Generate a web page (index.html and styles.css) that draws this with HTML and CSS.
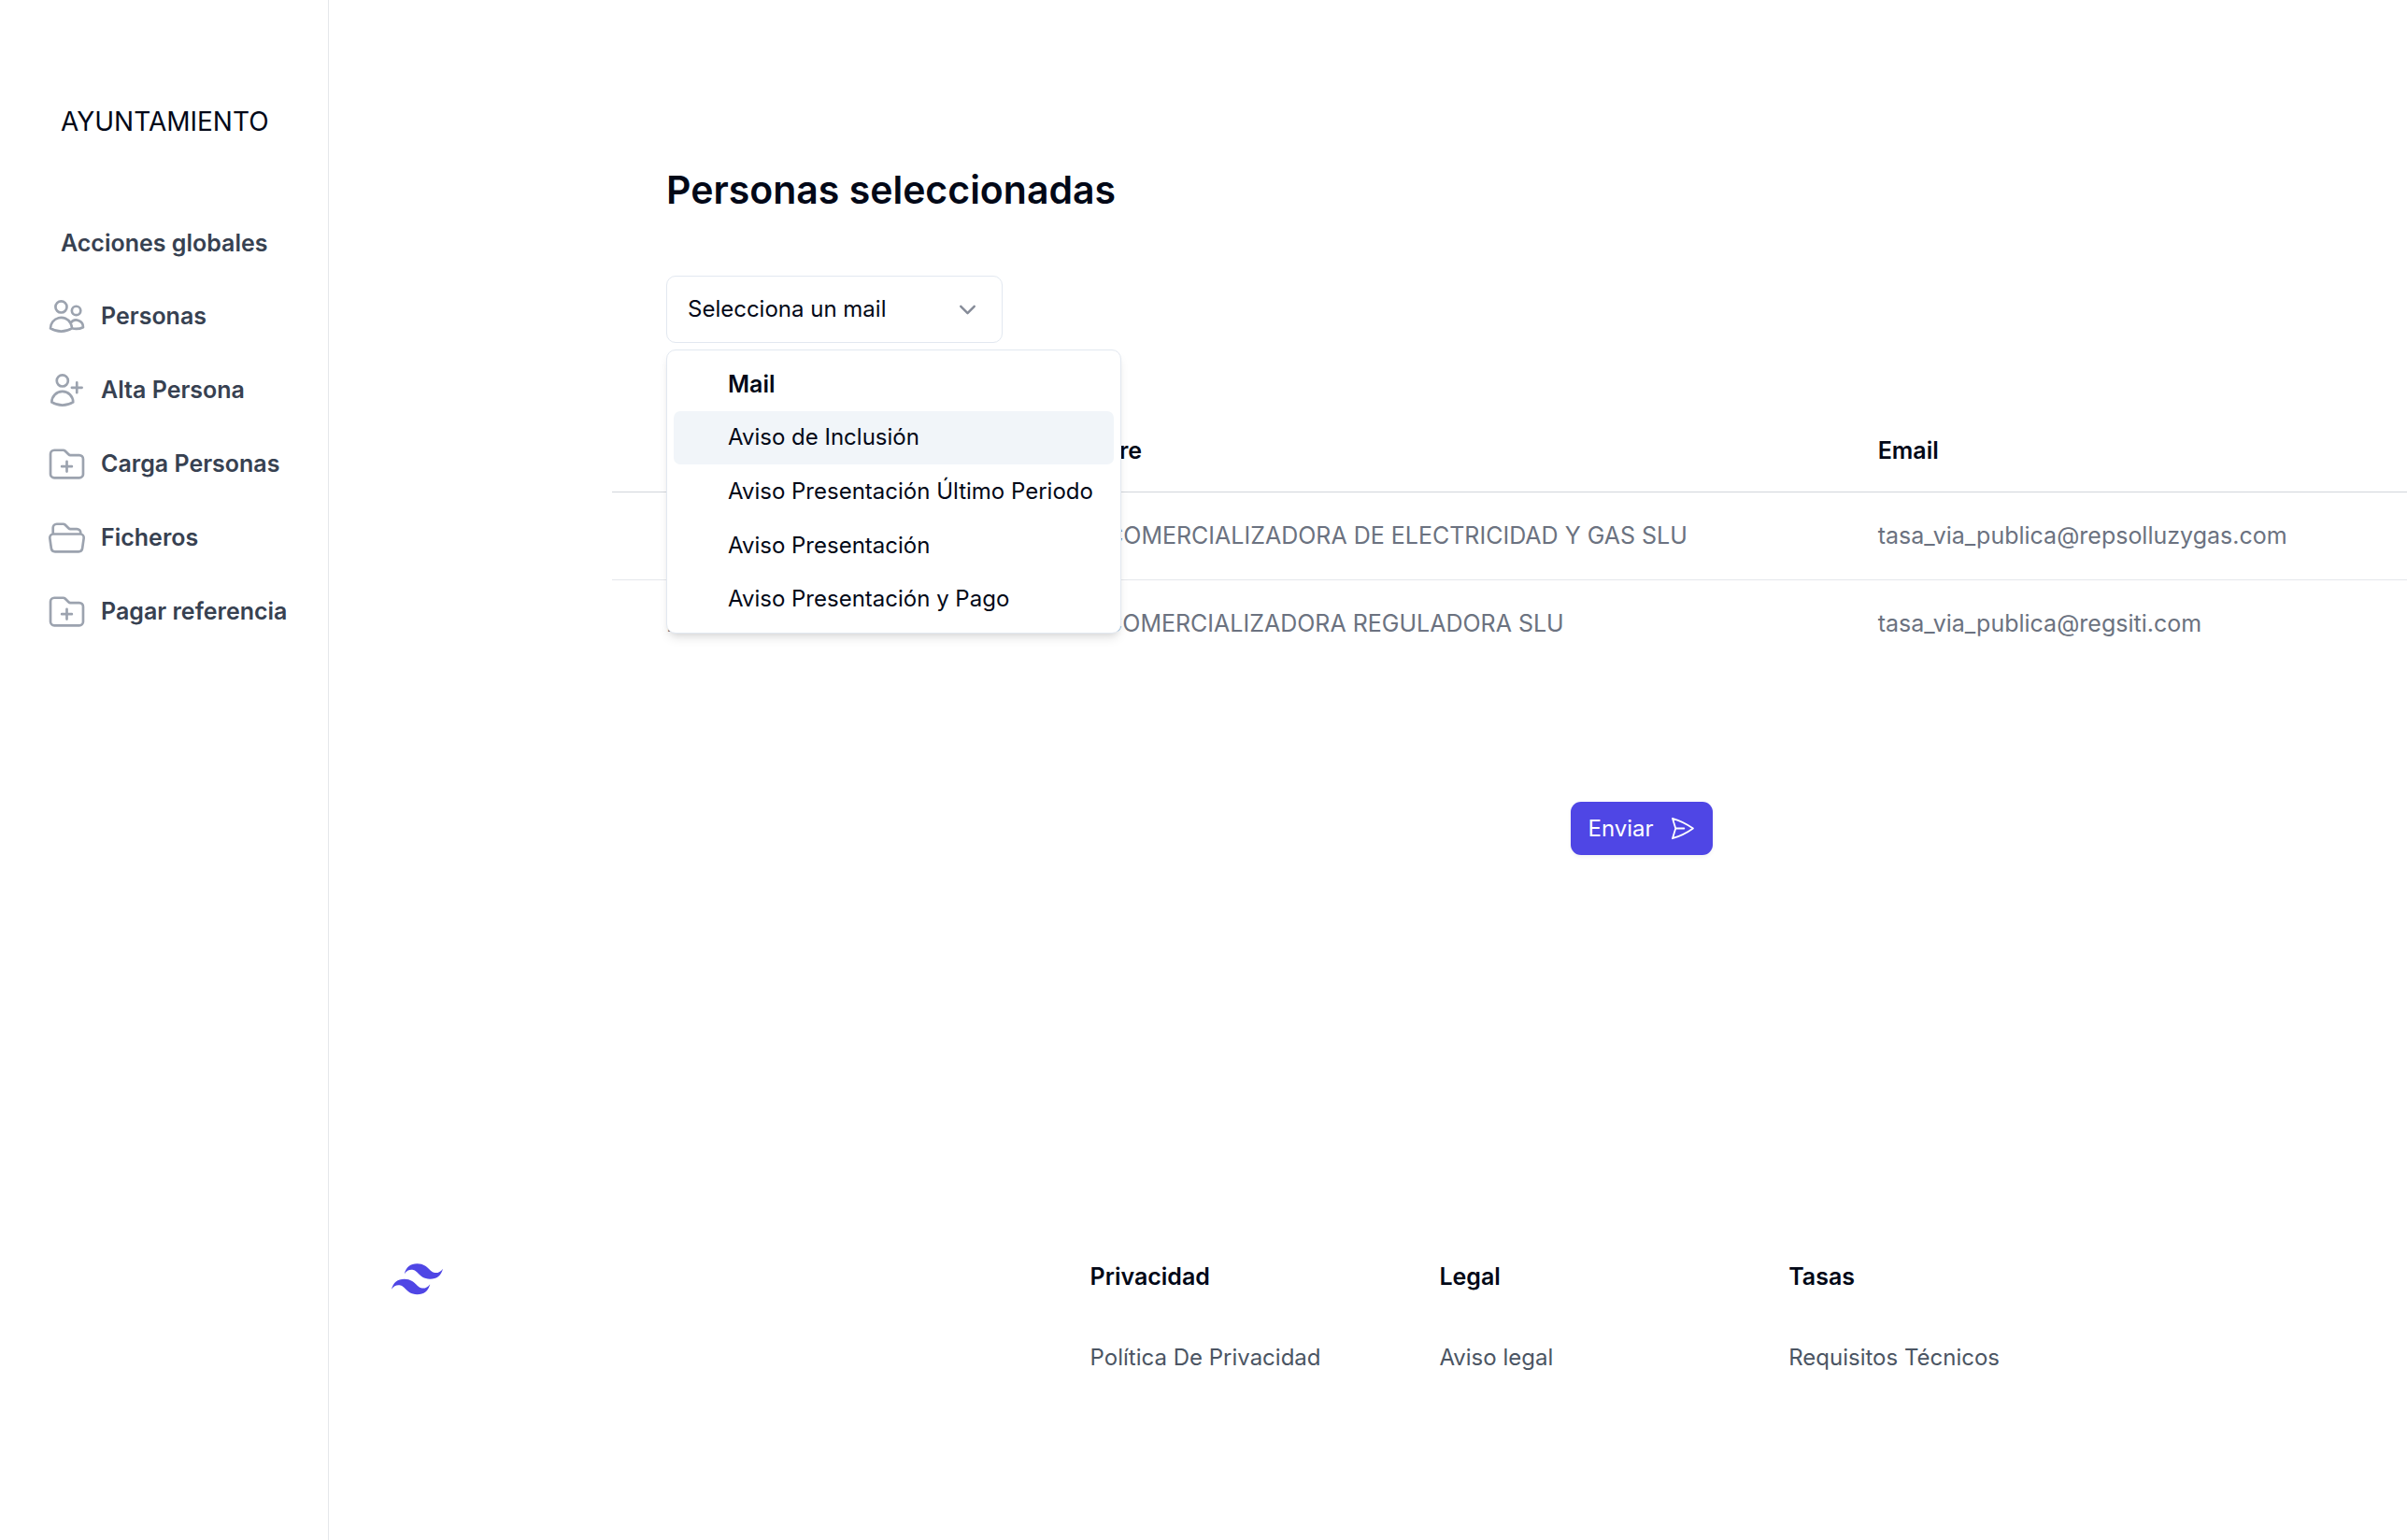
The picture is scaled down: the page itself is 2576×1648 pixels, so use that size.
FILE: index.html
```html
<!DOCTYPE html>
<html lang="es">
<head>
<meta charset="utf-8">
<meta name="viewport" content="width=device-width, initial-scale=1">
<title>Personas seleccionadas</title>
<link rel="stylesheet" href="styles.css">
</head>
<body>
<div class="layout">
  <aside class="sidebar">
    <p class="brand">AYUNTAMIENTO</p>
    <nav class="nav">
      <h2 class="nav-title">Acciones globales</h2>
      <a class="nav-link" href="#"><svg class="nav-icon" viewBox="0 0 24 24"><path d="M15 19.128a9.38 9.38 0 0 0 2.625.372 9.337 9.337 0 0 0 4.121-.952 4.125 4.125 0 0 0-7.533-2.493M15 19.128v-.003c0-1.113-.285-2.16-.786-3.07M15 19.128v.106A12.318 12.318 0 0 1 8.624 21c-2.331 0-4.512-.645-6.374-1.766l-.001-.109a6.375 6.375 0 0 1 11.964-3.07M12 6.375a3.375 3.375 0 1 1-6.75 0 3.375 3.375 0 0 1 6.75 0Zm8.25 2.25a2.625 2.625 0 1 1-5.25 0 2.625 2.625 0 0 1 5.25 0Z"/></svg>Personas</a>
      <a class="nav-link" href="#"><svg class="nav-icon" viewBox="0 0 24 24"><path d="M18 7.5v3m0 0v3m0-3h3m-3 0h-3m-2.25-4.125a3.375 3.375 0 1 1-6.75 0 3.375 3.375 0 0 1 6.75 0ZM3 19.235v-.11a6.375 6.375 0 0 1 12.75 0v.109A12.318 12.318 0 0 1 9.374 21c-2.331 0-4.512-.645-6.374-1.766Z"/></svg>Alta Persona</a>
      <a class="nav-link" href="#"><svg class="nav-icon" viewBox="0 0 24 24"><path d="M12 10.5v6m3-3H9m4.06-7.19-2.12-2.12a1.5 1.5 0 0 0-1.061-.44H4.5A2.25 2.25 0 0 0 2.25 6v12a2.25 2.25 0 0 0 2.25 2.25h15A2.25 2.25 0 0 0 21.75 18V9a2.25 2.25 0 0 0-2.25-2.25h-5.379a1.5 1.5 0 0 1-1.06-.44Z"/></svg>Carga Personas</a>
      <a class="nav-link" href="#"><svg class="nav-icon" viewBox="0 0 24 24"><path d="M3.75 9.776c.112-.017.227-.026.344-.026h15.812c.117 0 .232.009.344.026m-16.5 0a2.25 2.25 0 0 0-1.883 2.542l.857 6a2.25 2.25 0 0 0 2.227 1.932H19.05a2.25 2.25 0 0 0 2.227-1.932l.857-6a2.25 2.25 0 0 0-1.883-2.542m-16.5 0V6A2.25 2.25 0 0 1 6 3.75h3.879a1.5 1.5 0 0 1 1.06.44l2.122 2.12a1.5 1.5 0 0 0 1.06.44H18A2.25 2.25 0 0 1 20.25 9v.776"/></svg>Ficheros</a>
      <a class="nav-link" href="#"><svg class="nav-icon" viewBox="0 0 24 24"><path d="M12 10.5v6m3-3H9m4.06-7.19-2.12-2.12a1.5 1.5 0 0 0-1.061-.44H4.5A2.25 2.25 0 0 0 2.25 6v12a2.25 2.25 0 0 0 2.25 2.25h15A2.25 2.25 0 0 0 21.75 18V9a2.25 2.25 0 0 0-2.25-2.25h-5.379a1.5 1.5 0 0 1-1.06-.44Z"/></svg>Pagar referencia</a>
    </nav>
  </aside>

  <div class="page">
    <main class="content">
      <header class="toolbar">
        <h1 class="title">Personas seleccionadas</h1>
        <div class="picker">
          <select class="picker-select" aria-label="Selecciona un mail">
            <option>Selecciona un mail</option>
          </select>
          <svg class="picker-chevron" viewBox="0 0 24 24"><path d="m6 9 6 6 6-6"/></svg>
          <div class="menu" role="listbox" aria-label="Mail">
            <div class="menu-label">Mail</div>
            <button class="menu-item menu-item-active" type="button" role="option" aria-selected="true">Aviso de Inclusión</button>
            <button class="menu-item" type="button" role="option" aria-selected="false">Aviso Presentación Último Periodo</button>
            <button class="menu-item" type="button" role="option" aria-selected="false">Aviso Presentación</button>
            <button class="menu-item" type="button" role="option" aria-selected="false">Aviso Presentación y Pago</button>
          </div>
        </div>
      </header>

      <table class="people">
        <thead>
          <tr><th class="col-id">CIF</th><th class="col-name">Nombre</th><th class="col-email">Email</th></tr>
        </thead>
        <tbody>
          <tr><td class="col-id">B</td><td class="col-name">REPSOL COMERCIALIZADORA DE ELECTRICIDAD Y GAS SLU</td><td class="col-email">tasa_via_publica@repsolluzygas.com</td></tr>
          <tr><td class="col-id">B</td><td class="col-name">REGSITI COMERCIALIZADORA REGULADORA SLU</td><td class="col-email">tasa_via_publica@regsiti.com</td></tr>
        </tbody>
      </table>

      <div class="actions">
        <button class="send" type="submit">Enviar<svg class="send-icon" viewBox="0 0 24 24"><path d="M6 12 3.269 3.125A59.769 59.769 0 0 1 21.485 12 59.768 59.768 0 0 1 3.27 20.875L5.999 12Zm0 0h7.5"/></svg></button>
      </div>
    </main>

    <footer class="footer">
      <svg class="logo" viewBox="0 0 54 33"><path d="M27 0c-7.2 0-11.7 3.6-13.5 10.8 2.7-3.6 5.85-4.95 9.45-4.05 2.054.513 3.522 2.004 5.147 3.653C30.744 13.09 33.808 16.2 40.5 16.2c7.2 0 11.7-3.6 13.5-10.8-2.7 3.6-5.85 4.95-9.45 4.05-2.054-.513-3.522-2.004-5.147-3.653C36.756 3.11 33.692 0 27 0zM13.5 16.2C6.3 16.2 1.8 19.8 0 27c2.7-3.6 5.85-4.95 9.45-4.05 2.054.514 3.522 2.004 5.147 3.653C17.244 29.29 20.308 32.4 27 32.4c7.2 0 11.7-3.6 13.5-10.8-2.7 3.6-5.85 4.95-9.45 4.05-2.054-.513-3.522-2.004-5.147-3.653C23.256 19.31 20.192 16.2 13.5 16.2z"/></svg>
      <section class="footer-group">
        <h3 class="footer-title">Privacidad</h3>
        <a class="footer-link" href="#">Política De Privacidad</a>
      </section>
      <section class="footer-group">
        <h3 class="footer-title">Legal</h3>
        <a class="footer-link" href="#">Aviso legal</a>
      </section>
      <section class="footer-group">
        <h3 class="footer-title">Tasas</h3>
        <a class="footer-link" href="#">Requisitos Técnicos</a>
      </section>
    </footer>
  </div>
</div>
</body>
</html>
```
FILE: styles.css
```css
*,
*::before,
*::after {
  box-sizing: border-box;
}

body {
  margin: 0;
  background: #fff;
  color: #020817;
  font-family: Inter, "Liberation Sans", sans-serif;
  font-size: 25px;
  line-height: 36px;
}

h1,
h2,
h3,
p {
  margin: 0;
}

a {
  color: inherit;
  text-decoration: none;
}

button,
select {
  font: inherit;
  font-size: 24px;
  color: inherit;
}

svg {
  flex: none;
  fill: none;
  stroke: currentColor;
  stroke-width: 1.5;
  stroke-linecap: round;
  stroke-linejoin: round;
}

.layout {
  display: grid;
  grid-template-columns: 352px minmax(0, 1fr);
  min-height: 100vh;
}

/* Sidebar */
.sidebar {
  padding: 108px 36px 0;
  border-right: 1px solid #e5e7eb;
}

.brand {
  padding-left: 29px;
  font-size: 28px;
  line-height: 44px;
}

.nav {
  display: flex;
  flex-direction: column;
  gap: 7px;
  margin-top: 72px;
  color: #374151;
  font-weight: 600;
  white-space: nowrap;
}

.nav-title {
  padding: 18px 0 17px 29px;
  font-size: 25px;
  font-weight: 600;
}

.nav-link {
  display: flex;
  align-items: center;
  gap: 15px;
  height: 72px;
  padding-left: 14px;
}

.nav-icon {
  width: 43px;
  height: 43px;
  color: #9ca3af;
}

/* Main column */
.page {
  display: flex;
  flex-direction: column;
}

.content {
  padding: 174px 0 0 303px;
}

.toolbar {
  padding-left: 58px;
}

.title {
  font-size: 41px;
  line-height: 58px;
  font-weight: 600;
}

.picker {
  position: relative;
  width: 360px;
  margin-top: 63px;
}

.picker-select {
  display: block;
  width: 100%;
  height: 72px;
  padding: 0 22px;
  border: 1px solid #e2e8f0;
  border-radius: 10px;
  background: #fff;
  appearance: none;
}

.picker-chevron {
  position: absolute;
  top: 22px;
  right: 23px;
  width: 29px;
  height: 29px;
  color: #858b98;
  stroke-width: 2;
}

.menu {
  position: absolute;
  top: 79px;
  left: 0;
  display: grid;
  grid-auto-rows: 1fr;
  width: 487px;
  height: 304px;
  padding: 7px;
  border: 1px solid #e2e8f0;
  border-radius: 10px;
  background: #fff;
  box-shadow: 0 7px 11px -2px rgb(0 0 0 / 0.1), 0 4px 7px -4px rgb(0 0 0 / 0.1);
}

.menu-label,
.menu-item {
  display: flex;
  align-items: center;
  padding: 0 0 0 58px;
  border: 0;
  border-radius: 7px;
  background: none;
  white-space: nowrap;
}

.menu-label {
  font-weight: 600;
}

.menu-item-active {
  background: #f1f5f9;
}

/* Table */
.people {
  width: 100%;
  margin-top: 71px;
  border-collapse: collapse;
  table-layout: fixed;
  text-align: left;
  white-space: nowrap;
}

.people th {
  height: 88px;
  padding: 0;
  border-bottom: 1px solid #d1d5db;
  font-weight: 600;
}

.people td {
  height: 94px;
  padding: 0;
  color: #6b7280;
}

.people tbody tr + tr {
  border-top: 1px solid #e5e7eb;
}

.people .col-id {
  width: 22%;
  padding-left: 58px;
}

.people td.col-name {
  padding-left: 3px;
}

.people th.col-name {
  padding-left: 48px;
}

.people .col-email {
  width: 30%;
  padding-left: 10px;
}

/* Send */
.actions {
  display: flex;
  justify-content: center;
  margin-top: 144px;
  padding-left: 283px;
}

.send {
  display: flex;
  align-items: center;
  gap: 16px;
  height: 57px;
  padding: 0 18px;
  border: 0;
  border-radius: 11px;
  background: #4f46e5;
  color: #fff;
  box-shadow: 0 2px 4px rgb(0 0 0 / 0.05);
}

.send-icon {
  width: 29px;
  height: 29px;
}

/* Footer */
.footer {
  display: grid;
  grid-template-columns: 2fr 1fr 1fr 1fr;
  margin-top: 433px;
  padding: 0 288px 144px 67px;
}

.logo {
  width: 55px;
  height: 34px;
  margin-top: 4px;
  fill: #4f46e5;
  stroke: none;
}

.footer-group {
  display: flex;
  flex-direction: column;
  gap: 51px;
  white-space: nowrap;
}

.footer-title {
  font-size: 25px;
  font-weight: 600;
}

.footer-link {
  color: #4b5563;
  font-size: 24px;
}
```
